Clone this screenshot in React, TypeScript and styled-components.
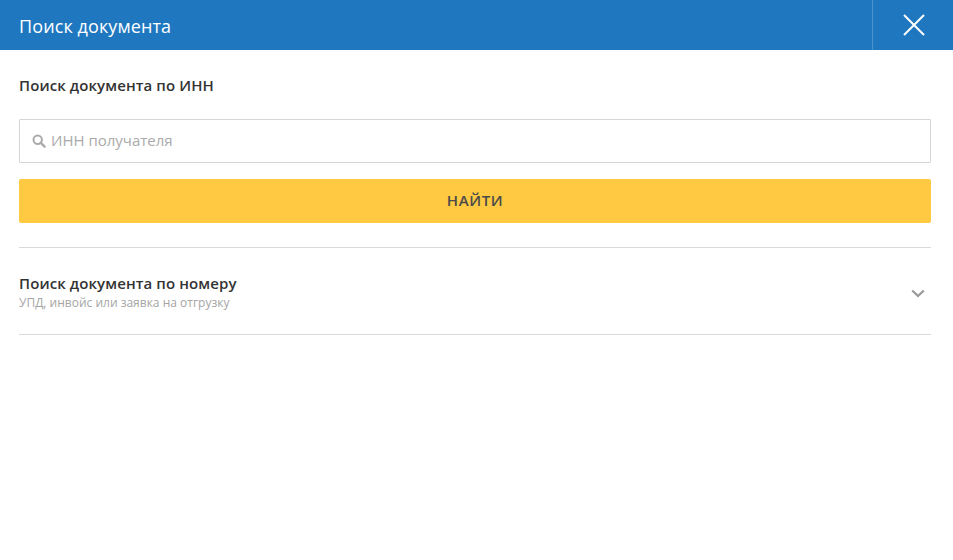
import React from 'react';
import styled, { createGlobalStyle } from 'styled-components';

const GlobalStyle = createGlobalStyle`
    html, body {
        margin: 0;
        padding: 0;
        height: 100%;
        background: #fff;
    }
    body {
        font-family: "Open Sans", "Noto Sans", sans-serif;
    }
`;

const Host = styled.div`
    width: 100%;
    min-height: 560px;
    display: flex;
    flex-direction: column;
`;

const Header = styled.header`
    height: 50px;
    display: flex;
    align-items: stretch;
    justify-content: space-between;
    background-color: #1f78bf;
`;

const Title = styled.h1`
    margin: 0;
    padding-left: 19px;
    font-size: 18px;
    font-weight: 400;
    letter-spacing: 0.1px;
    line-height: 52px;
    color: #fff;
`;

const CloseButton = styled.button`
    width: 81px;
    padding: 0 0 0 2px;
    display: flex;
    align-items: center;
    justify-content: center;
    background: transparent;
    border: 0;
    border-left: 1px solid rgba(255, 255, 255, 0.2);
`;

const Content = styled.main`
    padding: 0 22px 0 19px;
    display: flex;
    flex-direction: column;
`;

const SectionTitle = styled.h2`
    margin: 0;
    padding-top: 25px;
    font-size: 15px;
    font-weight: 600;
    letter-spacing: 0.1px;
    line-height: 20px;
    color: #333;
`;

const SearchField = styled.label`
    margin-top: 24px;
    height: 44px;
    box-sizing: border-box;
    display: flex;
    align-items: center;
    gap: 5px;
    padding-left: 12px;
    border: 1px solid #d6d6d6;
    border-radius: 1px;
`;

const SearchInput = styled.input`
    flex: 1;
    border: 0;
    outline: 0;
    padding: 0 0 2px;
    font-family: inherit;
    font-size: 15px;
    color: #333;

    &::placeholder {
        color: #aaa;
        opacity: 1;
    }
`;

const SubmitButton = styled.button`
    margin-top: 16px;
    height: 44px;
    padding: 0 0 2px;
    border: 0;
    border-radius: 2px;
    background-color: #ffc942;
    font-family: inherit;
    font-size: 15px;
    font-weight: 600;
    letter-spacing: 0.6px;
    color: #4a4a4a;
`;

const Accordion = styled.section`
    margin-top: 24px;
    height: 88px;
    box-sizing: border-box;
    display: flex;
    align-items: center;
    justify-content: space-between;
    padding: 0 6px 0 0;
    border-top: 1px solid #d9d9d9;
    border-bottom: 1px solid #d9d9d9;
`;

const AccordionText = styled.div`
    display: flex;
    flex-direction: column;
    gap: 2px;
`;

const AccordionTitle = styled.div`
    font-size: 15px;
    font-weight: 600;
    letter-spacing: 0.1px;
    line-height: 20px;
    color: #333;
`;

const AccordionHint = styled.div`
    font-size: 12px;
    line-height: 15px;
    color: #a5a5a5;
`;

const ChevronSlot = styled.div`
    display: flex;
    padding-top: 5px;
`;

const CloseIcon = () => (
    <svg width="22" height="22" viewBox="0 0 22 22" fill="none">
        <path d="M1 1L21 21M21 1L1 21" stroke="#fff" strokeWidth="2" />
    </svg>
);

const SearchIcon = () => (
    <svg width="14" height="14" viewBox="0 0 14 14" fill="none">
        <circle cx="5.7" cy="5.7" r="4.2" stroke="#aaa" strokeWidth="2" />
        <path d="M8.8 8.8L12.6 12.6" stroke="#aaa" strokeWidth="2.4" strokeLinecap="round" />
    </svg>
);

const ChevronIcon = () => (
    <svg width="14" height="9" viewBox="0 0 14 9" fill="none">
        <path d="M1.2 1.5L7 7L12.8 1.5" stroke="#999" strokeWidth="2.2" />
    </svg>
);

export default function App() {
    return (
        <Host>
            <GlobalStyle />
            <Header>
                <Title>Поиск документа</Title>
                <CloseButton aria-label="Закрыть">
                    <CloseIcon />
                </CloseButton>
            </Header>
            <Content>
                <SectionTitle>Поиск документа по ИНН</SectionTitle>
                <SearchField>
                    <SearchIcon />
                    <SearchInput placeholder="ИНН получателя" />
                </SearchField>
                <SubmitButton>НАЙТИ</SubmitButton>
                <Accordion>
                    <AccordionText>
                        <AccordionTitle>Поиск документа по номеру</AccordionTitle>
                        <AccordionHint>УПД, инвойс или заявка на отгрузку</AccordionHint>
                    </AccordionText>
                    <ChevronSlot>
                        <ChevronIcon />
                    </ChevronSlot>
                </Accordion>
            </Content>
        </Host>
    );
}
